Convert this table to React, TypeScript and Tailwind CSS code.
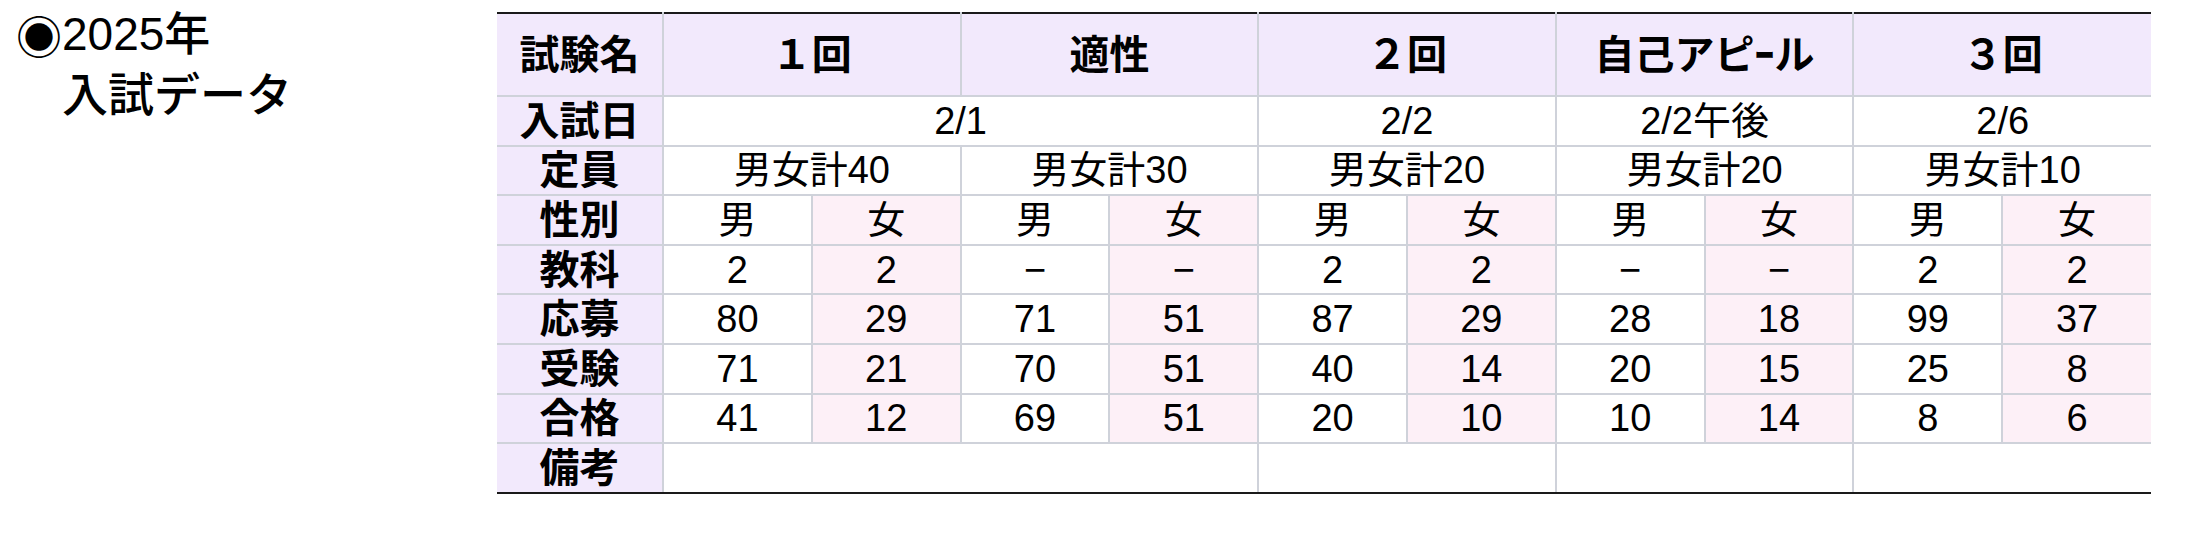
import { FC, ReactNode } from 'react';

import clsx from 'clsx';

type Exam = {
  name: string;
  capacity: string;
  subjects: [string, string];
  applied: [string, string];
  examined: [string, string];
  passed: [string, string];
};

const EXAMS: Exam[] = [
  { name: '１回', capacity: '男女計40', subjects: ['2', '2'], applied: ['80', '29'], examined: ['71', '21'], passed: ['41', '12'] },
  { name: '適性', capacity: '男女計30', subjects: ['−', '−'], applied: ['71', '51'], examined: ['70', '51'], passed: ['69', '51'] },
  { name: '２回', capacity: '男女計20', subjects: ['2', '2'], applied: ['87', '29'], examined: ['40', '14'], passed: ['20', '10'] },
  { name: '自己アピｰル', capacity: '男女計20', subjects: ['−', '−'], applied: ['28', '18'], examined: ['20', '15'], passed: ['10', '14'] },
  { name: '３回', capacity: '男女計10', subjects: ['2', '2'], applied: ['99', '37'], examined: ['25', '8'], passed: ['8', '6'] },
];

// date cells span sub-columns (1回 and 適性 share one day)
const DATES: { label: string; span: number }[] = [
  { label: '2/1', span: 4 },
  { label: '2/2', span: 2 },
  { label: '2/2午後', span: 2 },
  { label: '2/6', span: 2 },
];

const FONT = "font-['Liberation_Sans','Noto_Sans_CJK_JP',sans-serif]";
const CELL = 'border-x-2 border-y-2 border-[#cfd2da] text-center align-middle leading-none p-0';
const LABEL_BG = 'bg-[#f2e9fc]';
const GIRL_BG = 'bg-[#fdf0f7]';

const Label: FC<{ children: ReactNode; bottom?: boolean }> = ({ children, bottom = false }) => (
  <th className={clsx(CELL, LABEL_BG, 'border-l-0 text-[40px] font-bold', bottom && 'border-b-[#1a1a1a]')}>
    {children}
  </th>
);

const Td: FC<{ children?: ReactNode; span?: number; girl?: boolean; last?: boolean; bottom?: boolean }> = ({
  children,
  span = 1,
  girl = false,
  last = false,
  bottom = false,
}) => (
  <td
    colSpan={span}
    className={clsx(
      CELL,
      'text-[38px] font-normal',
      girl && GIRL_BG,
      last && 'border-r-0',
      bottom && 'border-b-[#1a1a1a]',
    )}
  >
    {children}
  </td>
);

const PairRow: FC<{ label: string; values: (e: Exam) => [string, string] }> = ({ label, values }) => (
  <tr className="h-[49.6px]">
    <Label>{label}</Label>
    {EXAMS.map((e, i) => {
      const [boy, girl] = values(e);
      return [
        <Td key={`${i}b`}>{boy}</Td>,
        <Td key={`${i}g`} girl last={i === EXAMS.length - 1}>
          {girl}
        </Td>,
      ];
    })}
  </tr>
);

const App: FC = () => (
  <div className={clsx('flex h-[560px] w-[2210px] bg-white text-black', FONT)}>
    <div className="w-[497px] shrink-0 pl-[16px] pt-[4px]">
      <div className="flex text-[46px] font-medium leading-[61px]">
        <span className="font-['Noto_Sans_CJK_JP',sans-serif] font-normal">◉</span>
        <div>
          <div>2025年</div>
          <div>入試データ</div>
        </div>
      </div>
    </div>

    <div className="pt-[12px]">
      <table className="w-[1654px] table-fixed border-collapse">
        <colgroup>
          <col className="w-[166px]" />
          {Array.from({ length: 10 }).map((_, i) => (
            <col key={i} />
          ))}
        </colgroup>
        <tbody>
          <tr className="h-[83px]">
            <th className={clsx(CELL, LABEL_BG, 'border-l-0 border-t-[#1a1a1a] text-[40px] font-bold')}>試験名</th>
            {EXAMS.map((e, i) => (
              <th
                key={e.name}
                colSpan={2}
                className={clsx(
                  CELL,
                  LABEL_BG,
                  'border-t-[#1a1a1a] text-[40px] font-bold',
                  i === EXAMS.length - 1 && 'border-r-0',
                )}
              >
                {e.name}
              </th>
            ))}
          </tr>
          <tr className="h-[49.6px]">
            <Label>入試日</Label>
            {DATES.map((d, i) => (
              <Td key={d.label} span={d.span} last={i === DATES.length - 1}>
                {d.label}
              </Td>
            ))}
          </tr>
          <tr className="h-[49.6px]">
            <Label>定員</Label>
            {EXAMS.map((e, i) => (
              <Td key={e.name} span={2} last={i === EXAMS.length - 1}>
                {e.capacity}
              </Td>
            ))}
          </tr>
          <PairRow label="性別" values={() => ['男', '女']} />
          <PairRow label="教科" values={(e) => e.subjects} />
          <PairRow label="応募" values={(e) => e.applied} />
          <PairRow label="受験" values={(e) => e.examined} />
          <PairRow label="合格" values={(e) => e.passed} />
          <tr className="h-[49.6px]">
            <Label bottom>備考</Label>
            {DATES.map((d, i) => (
              <Td key={d.label} span={d.span} last={i === DATES.length - 1} bottom />
            ))}
          </tr>
        </tbody>
      </table>
    </div>
  </div>
);

export default App;
